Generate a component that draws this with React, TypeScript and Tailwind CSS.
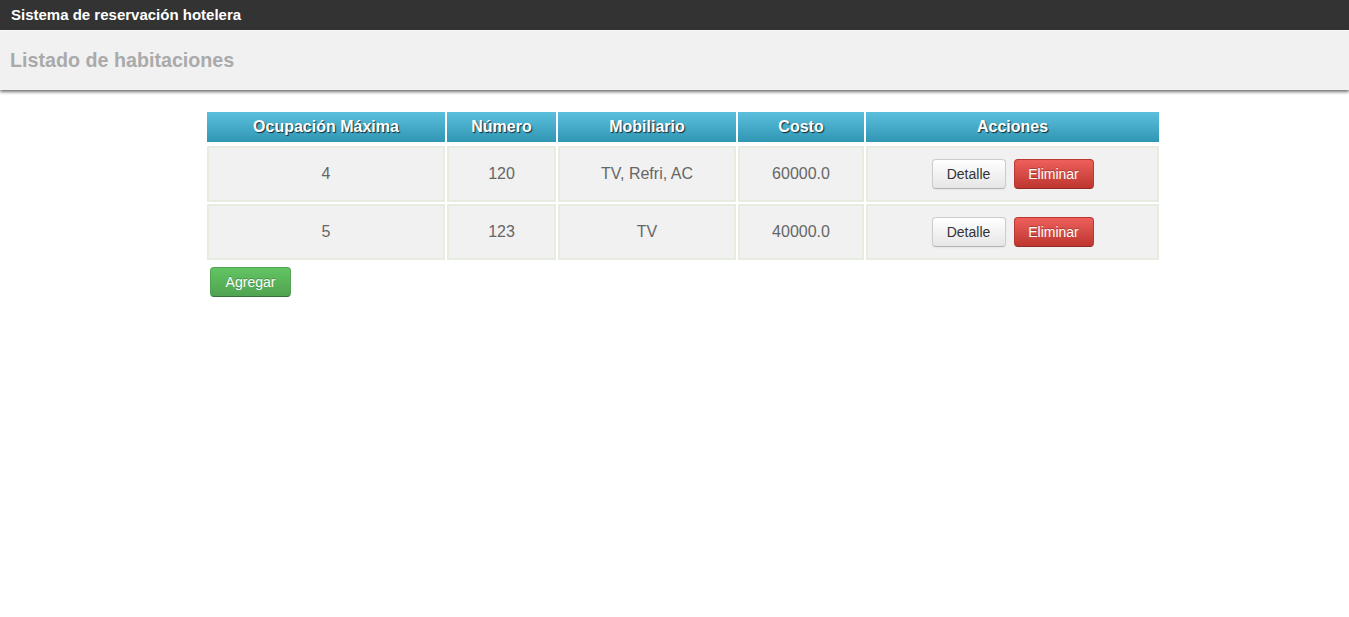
const rooms = [
  { ocupacion: 4, numero: 120, mobiliario: 'TV, Refri, AC', costo: '60000.0' },
  { ocupacion: 5, numero: 123, mobiliario: 'TV', costo: '40000.0' },
]

const headers = ['Ocupación Máxima', 'Número', 'Mobiliario', 'Costo', 'Acciones']

export default function App() {
  return (
    <div className="min-h-screen bg-white font-['Liberation_Sans',Arial,sans-serif]">
      <div className="h-[31px] bg-[#333333] px-[11px] flex items-center border-b border-white">
        <span className="text-white font-bold text-[15px]">Sistema de reservación hotelera</span>
      </div>
      <div className="h-[59px] bg-[#f1f1f1] px-[10px] flex items-center shadow-[0_2px_3px_rgba(0,0,0,0.55)]">
        <h1 className="text-[19.7px] font-bold text-[#aaaaaa]">Listado de habitaciones</h1>
      </div>

      <div className="ml-[207px] mt-[22px] w-[952px]">
        <div className="grid grid-cols-[238px_109px_178px_126px_293px] gap-x-[2px]">
          {headers.map((h) => (
            <div
              key={h}
              className="h-[30px] flex items-center justify-center bg-gradient-to-b from-[#5bc0de] to-[#2f96b4] text-white font-bold text-[16px] [text-shadow:1px_1px_1px_rgba(0,0,0,0.75)]"
            >
              {h}
            </div>
          ))}
        </div>
        <div className="mt-[4px] flex flex-col gap-[2px]">
          {rooms.map((r) => (
            <div key={r.numero} className="grid grid-cols-[238px_109px_178px_126px_293px] gap-x-[2px]">
              {[r.ocupacion, r.numero, r.mobiliario, r.costo].map((v, i) => (
                <div
                  key={i}
                  className="h-[56px] flex items-center justify-center bg-[#f1f1f1] border-2 border-[#e6ecdf] text-[16px] text-[#666666]"
                >
                  {v}
                </div>
              ))}
              <div className="h-[56px] flex items-center justify-center gap-[8px] bg-[#f1f1f1] border-2 border-[#e6ecdf]">
                <button className="h-[30px] w-[74px] rounded-[4px] border border-[#cccccc] border-b-[#b3b3b3] bg-gradient-to-b from-white to-[#e6e6e6] text-[14px] text-[#333333] shadow-[inset_0_1px_0_rgba(255,255,255,0.2),0_1px_2px_rgba(0,0,0,0.05)]">
                  Detalle
                </button>
                <button className="h-[30px] w-[80px] rounded-[4px] border border-[#bd362f] border-b-[#942a25] bg-gradient-to-b from-[#ee5f5b] to-[#bd362f] text-[14px] text-white [text-shadow:0_-1px_0_rgba(0,0,0,0.25)]">
                  Eliminar
                </button>
              </div>
            </div>
          ))}
        </div>
        <button className="mt-[7px] ml-[3px] h-[30px] w-[81px] rounded-[4px] border border-[#51a351] border-b-[#387038] bg-gradient-to-b from-[#62c462] to-[#51a351] text-[14px] text-white [text-shadow:0_-1px_0_rgba(0,0,0,0.25)]">
          Agregar
        </button>
      </div>
    </div>
  )
}
